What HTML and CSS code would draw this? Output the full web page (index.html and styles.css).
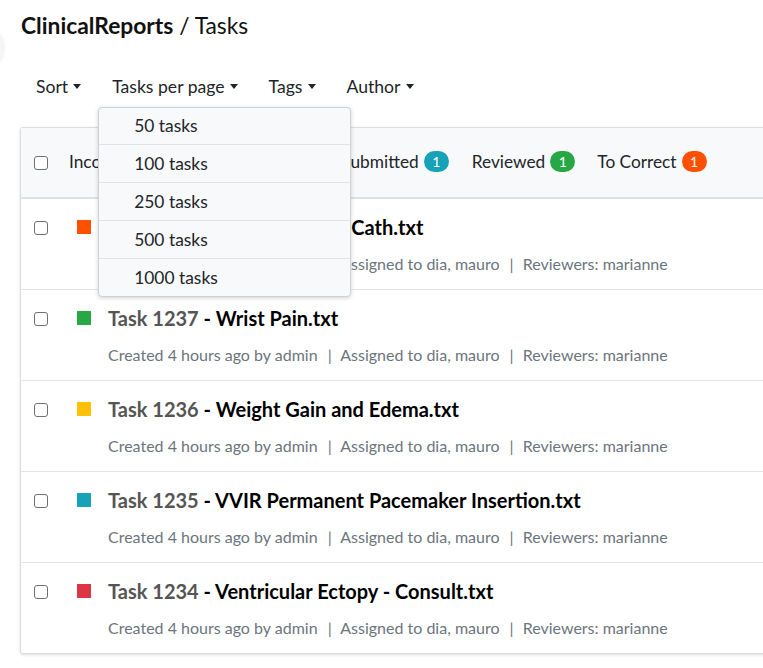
FILE: index.html
```html
<!DOCTYPE html>
<html>
<head>
<meta charset="utf-8">
<link rel="stylesheet" href="styles.css">
</head>
<body>
<div class="edge-handle"></div>
<div class="page">
  <h1 class="title"><span class="brand">ClinicalReports</span> / Tasks</h1>

  <nav class="filters">
    <div class="filter">Sort<span class="caret"></span></div>
    <div class="filter open">Tasks per page<span class="caret"></span>
      <ul class="menu">
        <li>50 tasks</li>
        <li>100 tasks</li>
        <li>250 tasks</li>
        <li>500 tasks</li>
        <li>1000 tasks</li>
      </ul>
    </div>
    <div class="filter">Tags<span class="caret"></span></div>
    <div class="filter">Author<span class="caret"></span></div>
  </nav>

  <section class="card">
    <header class="card-head">
      <input type="checkbox" class="check">
      <div class="tabs">
        <span class="tab t-incomplete">Incomplete <span class="badge b-gray">1</span></span>
        <span class="tab t-progress">In Progress <span class="badge b-blue">1</span></span>
        <span class="tab t-submitted">Submitted <span class="badge b-teal">1</span></span>
        <span class="tab t-reviewed">Reviewed <span class="badge b-green">1</span></span>
        <span class="tab t-correct">To Correct <span class="badge b-orange">1</span></span>
      </div>
    </header>

    <div class="row">
      <input type="checkbox" class="check">
      <span class="swatch s-orange"></span>
      <div class="body">
        <div class="name"><span class="num">Task 1238</span> - Chest Pains - L Cath.txt</div>
        <div class="meta">Created 4 hours ago by admin <span class="sep">|</span> Assigned to dia, mauro <span class="sep">|</span> Reviewers: marianne</div>
      </div>
    </div>

    <div class="row">
      <input type="checkbox" class="check">
      <span class="swatch s-green"></span>
      <div class="body">
        <div class="name"><span class="num">Task 1237</span> - Wrist Pain.txt</div>
        <div class="meta">Created 4 hours ago by admin <span class="sep">|</span> Assigned to dia, mauro <span class="sep">|</span> Reviewers: marianne</div>
      </div>
    </div>

    <div class="row">
      <input type="checkbox" class="check">
      <span class="swatch s-yellow"></span>
      <div class="body">
        <div class="name"><span class="num">Task 1236</span> - Weight Gain and Edema.txt</div>
        <div class="meta">Created 4 hours ago by admin <span class="sep">|</span> Assigned to dia, mauro <span class="sep">|</span> Reviewers: marianne</div>
      </div>
    </div>

    <div class="row">
      <input type="checkbox" class="check">
      <span class="swatch s-teal"></span>
      <div class="body">
        <div class="name"><span class="num">Task 1235</span> - VVIR Permanent Pacemaker Insertion.txt</div>
        <div class="meta">Created 4 hours ago by admin <span class="sep">|</span> Assigned to dia, mauro <span class="sep">|</span> Reviewers: marianne</div>
      </div>
    </div>

    <div class="row">
      <input type="checkbox" class="check">
      <span class="swatch s-red"></span>
      <div class="body">
        <div class="name"><span class="num">Task 1234</span> - Ventricular Ectopy - Consult.txt</div>
        <div class="meta">Created 4 hours ago by admin <span class="sep">|</span> Assigned to dia, mauro <span class="sep">|</span> Reviewers: marianne</div>
      </div>
    </div>
  </section>
</div>
</body>
</html>
```

FILE: styles.css
```css
html, body {
  margin: 0;
  padding: 0;
  overflow: hidden;
  background: #fff;
}
body {
  font-family: Lato, "Open Sans", sans-serif;
  color: #212529;
  position: relative;
  height: 668px;
}
.edge-handle {
  position: absolute;
  left: -40px;
  top: 26px;
  width: 44px;
  height: 44px;
  border-radius: 50%;
  background: #f5f5f5;
  box-shadow: 0 0 3px rgba(0,0,0,.1);
}
.page {
  padding: 11px 0 0 20px;
}
.title {
  margin: 0;
  font-size: 22.8px;
  line-height: 28px;
  font-weight: 400;
  color: #111;
  padding-left: 1px;
}
.brand {
  font-weight: 700;
}
.filters {
  display: flex;
  margin-top: 34px;
  height: 26px;
  align-items: center;
  font-size: 17.6px;
  color: #212529;
}
.filter {
  position: relative;
  padding: 0 15px 0 16px;
  display: flex;
  align-items: center;
  white-space: nowrap;
}
.caret {
  display: inline-block;
  width: 0;
  height: 0;
  margin-left: 5px;
  border-left: 4.5px solid transparent;
  border-right: 4.5px solid transparent;
  border-top: 5px solid #212529;
}
.menu {
  position: absolute;
  left: 2px;
  top: 31px;
  width: 251px;
  margin: 0;
  padding: 0;
  list-style: none;
  background: #f8f9fa;
  border: 1px solid #d0d3d6;
  border-radius: 4px;
  box-shadow: 0 1px 4px rgba(0,0,0,.18);
  z-index: 10;
}
.menu li {
  height: 37px;
  line-height: 37px;
  padding-left: 35px;
  font-size: 17.4px;
  color: #212529;
  border-top: 1px solid #e0e2e5;
}
.menu li:first-child {
  border-top: none;
  height: 36px;
  line-height: 36px;
}
.card {
  margin-top: 28px;
  width: 800px;
  border: 1px solid #dcdde0;
  border-radius: 3px;
  box-shadow: 0 1px 3px rgba(0,0,0,.14);
  background: #fff;
}
.card-head {
  display: flex;
  align-items: center;
  height: 69px;
  background: #f8f9fa;
  border-bottom: 2px solid #dfe1e5;
  padding-left: 13px;
}
.check {
  appearance: none;
  -webkit-appearance: none;
  width: 14px;
  height: 14px;
  margin: 0;
  border: 1.5px solid #6f6f6f;
  border-radius: 3px;
  background: #fff;
  flex: none;
  box-sizing: border-box;
}
.tabs {
  display: flex;
  align-items: center;
  font-size: 17.3px;
  color: #212529;
  margin-left: 21px;
  margin-top: -2px;
  white-space: nowrap;
}
.tab {
  display: flex;
  align-items: center;
}
.t-progress { margin-left: 24px; }
.t-submitted { margin-left: 20px; }
.t-reviewed { margin-left: 23px; }
.t-correct { margin-left: 22px; }
.badge {
  display: inline-block;
  margin-left: 5px;
  min-width: 25px;
  height: 21px;
  line-height: 21px;
  border-radius: 11px;
  color: #fff;
  font-size: 14px;
  text-align: center;
  box-sizing: border-box;
}
.b-gray { background: #6c757d; }
.b-blue { background: #007bff; }
.b-teal { background: #17a2b8; }
.b-green { background: #28a745; }
.b-orange { background: #ff4f00; }
.row {
  display: flex;
  align-items: flex-start;
  height: 90px;
  border-bottom: 1px solid #e3e4e8;
  padding-left: 13px;
}
.row:last-child {
  border-bottom: none;
}
.row .check {
  margin-top: 22px;
}
.swatch {
  width: 14px;
  height: 14px;
  margin-top: 21px;
  margin-left: 29px;
  flex: none;
}
.s-orange { background: #ff5000; }
.s-green { background: #28a745; }
.s-yellow { background: #ffc107; }
.s-teal { background: #17a2b8; }
.s-red { background: #dc3545; }
.body {
  margin-left: 17px;
  padding-top: 15px;
}
.name {
  font-size: 20px;
  line-height: 26px;
  font-weight: 700;
  color: #000;
  white-space: nowrap;
}
.num {
  color: #555;
  font-weight: 700;
}
.meta {
  margin-top: 13px;
  font-size: 16px;
  line-height: 22px;
  color: #6c757d;
  white-space: nowrap;
}
.sep {
  margin: 0 5px 0 6px;
}
```
